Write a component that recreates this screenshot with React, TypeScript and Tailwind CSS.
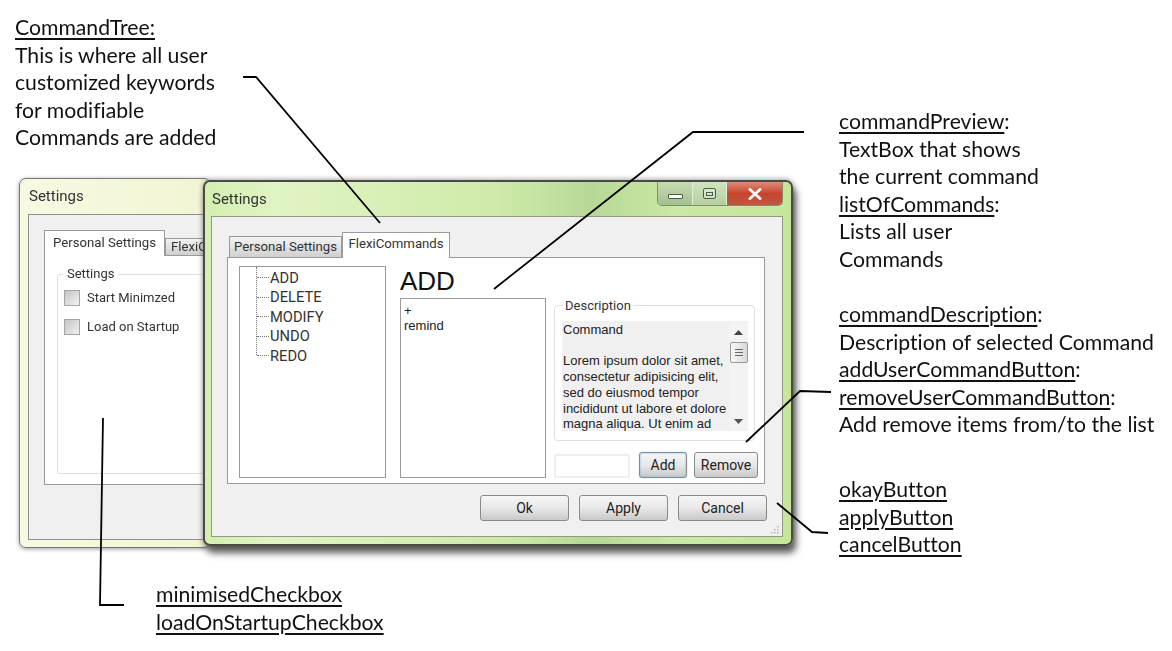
import React from "react";

const ui = "font-['Roboto','Liberation_Sans',sans-serif]";

function U({ children }: { children: React.ReactNode }) {
  return <span className="underline decoration-[1.5px] underline-offset-[3px]">{children}</span>;
}

function Note({ className, children }: { className: string; children: React.ReactNode }) {
  return (
    <div className={"absolute whitespace-nowrap text-[21.2px] leading-[27.5px] text-[#111] [font-variant-ligatures:none] font-['Lato','Liberation_Sans',sans-serif] " + className}>
      {children}
    </div>
  );
}

function Btn({ label, className }: { label: string; className: string }) {
  return (
    <div className={"flex items-center justify-center rounded-[3px] border border-[#8a8a8a] bg-gradient-to-b from-[#f6f6f6] via-[#e8e8e8] to-[#c9c9c9] text-[14px] text-[#222] " + className}>
      {label}
    </div>
  );
}

function Check({ label }: { label: string }) {
  return (
    <div className="flex h-[29px] items-start gap-[7px]">
      <div className="h-[16px] w-[16px] border border-[#a5a5a5] bg-gradient-to-br from-[#c4c4c4] to-[#f2f2f2]" />
      <span className="mt-[-2px] text-[13px] text-[#333]">{label}</span>
    </div>
  );
}

function TreeRow({ label }: { label: string }) {
  return (
    <div className="flex h-[19.5px] items-center">
      <div className="mr-[1px] w-[12px] border-t border-dotted border-[#777]" />
      <span className="text-[14.7px] text-[#333]">{label}</span>
    </div>
  );
}

function BackWindow() {
  return (
    <div className={"absolute left-[19px] top-[178px] flex h-[370px] w-[192px] flex-col overflow-hidden rounded-[7px] border border-[#777] bg-gradient-to-r from-[#f8f9e2] to-[#f2f5d2] pb-[7px] pl-[8px] shadow-[0_1px_4px_#999] blur-[0.4px] " + ui}>
      <div className="flex h-[35px] shrink-0 items-center pl-[1px] text-[15px] text-[#333]">Settings</div>
      <div className="flex flex-1 flex-col border border-[#8f8f8f] bg-[#f0f0f0] pb-[54px] pl-[15px] pt-[15px]">
        <div className="flex h-[26px] items-end">
          <div className="relative z-10 flex h-[26px] w-[121px] shrink-0 items-center justify-center border border-b-0 border-[#9a9a9a] bg-white pb-[2px] text-[13.2px] text-[#333]">Personal Settings</div>
          <div className="flex h-[18px] w-[80px] shrink-0 items-center border border-[#9a9a9a] bg-gradient-to-b from-[#f2f2f2] to-[#cfcfcf] pl-[5px] text-[13.2px] text-[#333]">FlexiC</div>
        </div>
        <div className="mt-[-1px] w-[400px] flex-1 border border-[#9a9a9a] bg-white pb-[10px] pl-[12px] pt-[9px]">
          <fieldset className="h-full rounded-[3px] border border-[#dcdfe3] pl-[6px] pt-[7px]">
            <legend className="ml-[-1px] px-[4px] text-[13px] leading-[18px] text-[#333]">Settings</legend>
            <Check label="Start Minimzed" />
            <Check label="Load on Startup" />
          </fieldset>
        </div>
      </div>
    </div>
  );
}

function Caption() {
  return (
    <div className="flex h-[24px] w-[126px] overflow-hidden rounded-b-[5px] border border-t-0 border-[#7d8f70]">
      <div className="flex w-[35px] items-center justify-center border-r border-[#e5efd8] bg-gradient-to-b from-[#c5dcb0] to-[#a4c08f]">
        <div className="mt-[5px] h-[5px] w-[15px] rounded-[1px] border border-[#4d5b48] bg-white" />
      </div>
      <div className="flex w-[34px] items-center justify-center border-r border-[#e5efd8] bg-gradient-to-b from-[#d0e4bf] to-[#b4cfa0]">
        <div className="flex h-[11px] w-[13px] items-center justify-center rounded-[2px] border border-[#4d5b48] bg-white/30">
          <div className="h-[4px] w-[7px] border border-[#4d5b48]" />
        </div>
      </div>
      <div className="flex flex-1 items-center justify-center bg-gradient-to-b from-[#dd8b78] via-[#c8442c] to-[#b85a40]">
        <svg width="14" height="12" viewBox="0 0 14 12">
          <path d="M2 1.5 L12 10.5 M12 1.5 L2 10.5" stroke="#f6f2ee" strokeWidth="3" strokeLinecap="round" />
          <path d="M2 1.5 L12 10.5 M12 1.5 L2 10.5" stroke="#ffffff" strokeWidth="1.5" strokeLinecap="round" />
        </svg>
      </div>
    </div>
  );
}

function Description() {
  return (
    <fieldset className="h-[144px] w-[201px] rounded-[4px] border border-[#dcdfe3] pl-[7px] pr-[6px] pt-[7px]">
      <legend className="ml-[1px] px-[2px] text-[13px] leading-[17px] text-[#333]">Description</legend>
      <div className="flex h-[110px] bg-[#f0f0f0]">
        <div className="flex-1 pl-[1px] pt-[1px] font-['Liberation_Sans',sans-serif] text-[13px] leading-[15.7px] text-[#222]">
          <div>Command</div>
          <div className="h-[15.7px]" />
          <div className="whitespace-nowrap">Lorem ipsum dolor sit amet,</div>
          <div className="whitespace-nowrap">consectetur adipisicing elit,</div>
          <div className="whitespace-nowrap">sed do eiusmod tempor</div>
          <div className="whitespace-nowrap">incididunt ut labore et dolore</div>
          <div className="whitespace-nowrap">magna aliqua. Ut enim ad</div>
        </div>
        <div className="flex w-[19px] flex-col items-center bg-[#f3f3f3]">
          <svg className="mt-[9px]" width="9" height="5" viewBox="0 0 9 5"><path d="M4.5 0 L9 5 L0 5 Z" fill="#444" /></svg>
          <div className="mt-[7px] flex h-[21px] w-[18px] flex-col items-center justify-center gap-[2px] rounded-[2px] border border-[#999] bg-gradient-to-r from-[#f8f8f8] to-[#d8d8d8]">
            <div className="h-px w-[8px] bg-[#666]" />
            <div className="h-px w-[8px] bg-[#666]" />
            <div className="h-px w-[8px] bg-[#666]" />
          </div>
          <svg className="mt-[56px]" width="9" height="5" viewBox="0 0 9 5"><path d="M4.5 5 L9 0 L0 0 Z" fill="#555" /></svg>
        </div>
      </div>
    </fieldset>
  );
}

function FrontWindow() {
  return (
    <div className={"absolute left-[203px] top-[180px] flex h-[366px] w-[590px] flex-col rounded-[7px] border-2 border-[#4a4a44] bg-[linear-gradient(90deg,#d4efb0_0%,#e0f4c4_12%,#cfeaa8_50%,#b7d996_66%,#cbe8a4_80%,#c6e69a_100%)] pb-[7px] pl-[6px] pr-[8px] shadow-[3px_7px_7px_rgba(50,50,50,0.8),0_-1px_5px_rgba(90,90,90,0.5)] blur-[0.4px] " + ui}>
      <div className="flex h-[34px] shrink-0 items-start justify-between">
        <span className="ml-[1px] mt-[6px] text-[15px] text-[#333]">Settings</span>
        <Caption />
      </div>
      <div className="relative flex flex-1 flex-col border border-[#8f9a84] bg-[#f0f0f0] pl-[15px] pr-[17px] pt-[15px]">
        <div className="flex h-[26px] items-end pl-[2px]">
          <div className="flex h-[22px] w-[113px] items-center justify-center border border-[#9a9a9a] bg-gradient-to-b from-[#f4f4f4] to-[#d0d0d0] text-[13.2px] text-[#333]">Personal Settings</div>
          <div className="relative z-10 flex h-[26px] w-[108px] items-center justify-center border border-b-0 border-[#9a9a9a] bg-white pb-[3px] text-[13.2px] text-[#333]">FlexiCommands</div>
        </div>
        <div className="mt-[-1px] flex h-[227px] border border-[#9a9a9a] bg-white pl-[11px] pt-[8px]">
          <div className="h-[212px] w-[147px] border border-[#9a9a9a] pl-[16px]">
            <div className="h-[88px] border-l border-dotted border-[#777] pt-px">
              <TreeRow label="ADD" />
              <TreeRow label="DELETE" />
              <TreeRow label="MODIFY" />
              <TreeRow label="UNDO" />
              <TreeRow label="REDO" />
            </div>
          </div>
          <div className="ml-[14px] flex w-[146px] flex-col">
            <div className="flex h-[32px] items-center pb-[2px] font-['Liberation_Sans',sans-serif] text-[26px] text-[#111]">ADD</div>
            <div className="h-[180px] border border-[#9a9a9a] pl-[3px] pt-[4px] font-['Liberation_Sans',sans-serif] text-[13px] leading-[15px] text-[#222]">
              <div>+</div>
              <div>remind</div>
            </div>
          </div>
          <div className="ml-[8px] flex flex-col pt-[31px]">
            <Description />
            <div className="mt-[11px] flex items-start">
              <div className="mt-[2px] h-[24px] w-[76px] rounded-[2px] border-2 border-[#eeeeee]" />
              <Btn label="Add" className="ml-[9px] h-[26px] w-[48px] border-[#3f9fd8] shadow-[inset_0_0_2px_#5cb8ea,0_0_1px_#3f9fd8]" />
              <Btn label="Remove" className="ml-[7px] h-[26px] w-[64px]" />
            </div>
          </div>
        </div>
        <div className="mt-[11px] flex justify-end gap-[10px]">
          <Btn label="Ok" className="h-[26px] w-[89px]" />
          <Btn label="Apply" className="h-[26px] w-[89px]" />
          <Btn label="Cancel" className="mr-[-2px] h-[26px] w-[89px]" />
        </div>
        <svg className="absolute bottom-[1px] right-[2px]" width="9" height="9" viewBox="0 0 9 9">
          <g fill="#b5b5b5">
            <rect x="6" y="0" width="1.5" height="1.5" />
            <rect x="3" y="3" width="1.5" height="1.5" />
            <rect x="6" y="3" width="1.5" height="1.5" />
            <rect x="0" y="6" width="1.5" height="1.5" />
            <rect x="3" y="6" width="1.5" height="1.5" />
            <rect x="6" y="6" width="1.5" height="1.5" />
          </g>
        </svg>
      </div>
    </div>
  );
}

export default function App() {
  return (
    <div className="relative h-[651px] w-[1172px] overflow-hidden bg-white">
      <BackWindow />
      <FrontWindow />
      <svg className="pointer-events-none absolute inset-0" width="1172" height="651" viewBox="0 0 1172 651" fill="none" stroke="#000" strokeWidth="1.8">
        <path d="M243 77 L256 77 L380 223" />
        <path d="M804 132 L693 132 L494 289" />
        <path d="M124 605 L100 605 L103 418" />
        <path d="M746 442 L800 391 L831 392" />
        <path d="M777 503 L812 532 L828 533" />
      </svg>
      <Note className="left-[15px] top-[14px]">
        <div><U>CommandTree:</U></div>
        <div>This is where all user</div>
        <div>customized keywords</div>
        <div>for modifiable</div>
        <div>Commands are added</div>
      </Note>
      <Note className="left-[839px] top-[108px]">
        <div><U>commandPreview</U>:</div>
        <div>TextBox that shows</div>
        <div>the current command</div>
        <div><U>listOfCommands</U>:</div>
        <div>Lists all user</div>
        <div>Commands</div>
      </Note>
      <Note className="left-[839px] top-[301px]">
        <div><U>commandDescription</U>:</div>
        <div>Description of selected Command</div>
        <div><U>addUserCommandButton</U>:</div>
        <div><U>removeUserCommandButton</U>:</div>
        <div>Add remove items from/to the list</div>
      </Note>
      <Note className="left-[839px] top-[476px]">
        <div><U>okayButton</U></div>
        <div><U>applyButton</U></div>
        <div><U>cancelButton</U></div>
      </Note>
      <Note className="left-[156px] top-[581px]">
        <div><U>minimisedCheckbox</U></div>
        <div><U>loadOnStartupCheckbox</U></div>
      </Note>
    </div>
  );
}
